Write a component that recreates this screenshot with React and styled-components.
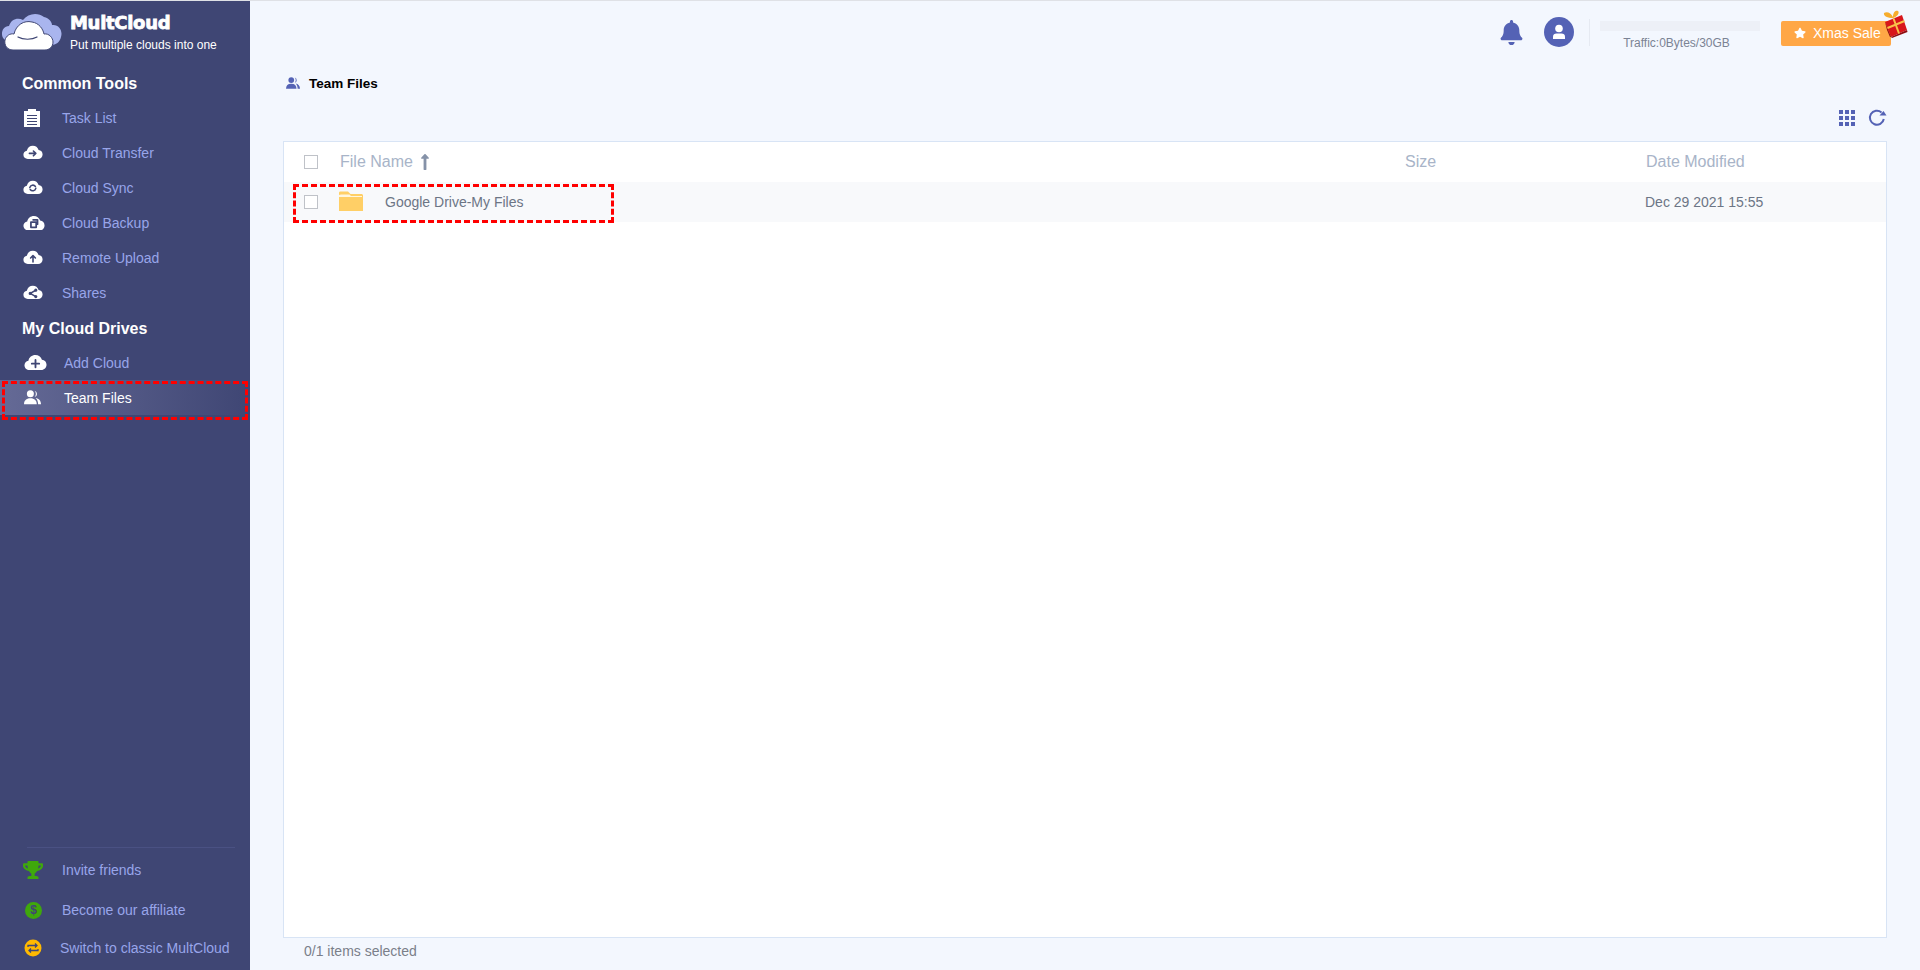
import React from 'react'
import styled, { createGlobalStyle } from 'styled-components'
import { FaBell, FaStar, FaTrophy, FaLongArrowAltUp } from 'react-icons/fa'

const GlobalStyle = createGlobalStyle`
  html, body {
    margin: 0;
    padding: 0;
    height: 100%;
    overflow: hidden;
    font-family: "Liberation Sans", Arial, sans-serif;
    background: #f3f7fe;
  }
`

const CLOUD = 'M6 17.500C2.800 17.500 .5 15.200 .5 12.300c0-2.600 1.800-4.600 4.300-5C5.500 3.400 8.600 1 12.300 1c3.400 0 6.200 2 7.200 5.200C22.400 6.300 24.500 8.800 24.500 11.800 24.500 15 22 17.500 18.800 17.500Z'

const CloudIcon = ({ width = 20, children }) => (
  <svg width={width} height={width * 0.72} viewBox="0 0 25 18">
    <path d={CLOUD} fill="#fff" />
    <g stroke="#3f4674" fill="none" strokeWidth="2" strokeLinecap="round" strokeLinejoin="round">
      {children}
    </g>
  </svg>
)

const Logo = () => (
  <svg width="62" height="40" viewBox="0 0 62 40">
    <path d="M3 28C-1 24 1 15 8 15 10 8 17 6 22 9 27 2 37 1 43 6 48 7 51 11 51 14 58 13 62 20 60 26 59 31 55 34 50 34L8 34Z" fill="#a9b5ee" />
    <path d="M12 39C6 39 3 34 4 29 5 25 9 22 13 23 15 14 23 9 31 11 38 12 42 18 43 23 48 22 52 27 52 31 52 36 48 39 44 39Z" fill="#fff" stroke="#3f4674" strokeWidth="1" />
    <path d="M17 26C22 29 31 29 36 26" stroke="#3f4674" strokeWidth="1.200" fill="none" strokeLinecap="round" />
  </svg>
)

const Gift = () => (
  <svg width="26" height="28" viewBox="0 0 26 28">
    <path d="M3 12L20 5 25 20 9 27Z" fill="#d8161b" />
    <path d="M9 27L3 12 5 20 8 27Z" fill="#8e0c10" />
    <path d="M9 27L25 20 25.500 22 10 28Z" fill="#8e0c10" />
    <path d="M11.500 8.500L17 23.500M5.500 18L22.500 11" stroke="#f8c04a" strokeWidth="2" fill="none" />
    <path d="M11 8C6 8 1 6 2 3 5 1 9 3 11 7 11 3 13 0 16 1 18 3 15 7 11 8Z" fill="#f6ad2d" />
  </svg>
)

const TaskIcon = () => (
  <svg width="18" height="19" viewBox="0 0 18 19">
    <path d="M1 3H5V1H13V3H17V19H1Z" fill="#fff" />
    <path d="M4 7.500H14M4 10.500H14M4 13.500H14M4 16.500H14" stroke="#3f4674" strokeWidth="1.200" />
  </svg>
)

const AvatarIcon = () => (
  <svg width="30" height="30" viewBox="0 0 30 30">
    <circle cx="15" cy="15" r="15" fill="#5462b5" />
    <circle cx="15" cy="11.500" r="3.800" fill="#fff" />
    <path d="M9 22V19.500C9 17.500 10.500 16.500 12.500 16.500H17.500C19.500 16.500 21 17.500 21 19.500V22Z" fill="#fff" />
  </svg>
)

const GridIcon = () => (
  <svg width="16" height="16" viewBox="0 0 16 16" fill="#5462b5">
    {[0, 6, 12].map((y) => [0, 6, 12].map((x) => (
      <rect key={x + '-' + y} x={x} y={y} width="4" height="4" />
    )))}
  </svg>
)

const RefreshIcon = () => (
  <svg width="19" height="18" viewBox="0 0 19 18">
    <path d="M13.500 3.400A7 7 0 1 0 15.800 10" stroke="#5462b5" strokeWidth="2" fill="none" />
    <path d="M11.500 6.500H18.500L15.500 2Z" fill="#5462b5" />
  </svg>
)

const TeamIcon = ({ width, color }) => (
  <svg width={width} height={width * 0.875} viewBox="0 0 16 14" fill={color}>
    <circle cx="6" cy="3.500" r="3.300" />
    <path d="M0 13.500C0 10 2 7.800 6 7.800S12 10 12 13.500Z" />
    <path d="M10 .6A3.200 3.200 0 0 1 10 6.700 5 5 0 0 0 10 .6ZM11 7.500C14 8 16 10 16 13.500H13.300C13.300 11 12.500 9 11 7.500Z" />
  </svg>
)

const tools = [
  { label: 'Task List', icon: <TaskIcon /> },
  { label: 'Cloud Transfer', icon: <CloudIcon><path d="M8 10.500h8M13 7.500l3 3-3 3" /></CloudIcon> },
  { label: 'Cloud Sync', icon: <CloudIcon><path d="M8.500 9.500a4 4 0 0 1 7-1.500M16 10.500a4 4 0 0 1-7 1.500" /></CloudIcon> },
  { label: 'Cloud Backup', icon: <CloudIcon width={22}><path d="M9 8h6v6H9zM11.500 5.500h5v5" /></CloudIcon> },
  { label: 'Remote Upload', icon: <CloudIcon><path d="M12.500 15V8M9.500 10l3-3 3 3" /></CloudIcon> },
  { label: 'Shares', icon: <CloudIcon><path d="M16 6.500l-7 4 7 4" /><circle cx="16" cy="6.500" r="1" /><circle cx="9" cy="10.500" r="1" /><circle cx="16" cy="14.500" r="1" /></CloudIcon> }
]

const App = () => (
  <Page>
    <GlobalStyle />
    <Sidebar>
      <Brand>
        <Logo />
        <BrandText>
          <BrandName>MultCloud</BrandName>
          <BrandTag>Put multiple clouds into one</BrandTag>
        </BrandText>
      </Brand>
      <SectionTitle>Common Tools</SectionTitle>
      {tools.map((tool) => (
        <NavItem key={tool.label}>
          <NavIcon>{tool.icon}</NavIcon>
          <span>{tool.label}</span>
        </NavItem>
      ))}
      <SectionTitle $spaced>My Cloud Drives</SectionTitle>
      <NavItem $wide>
        <NavIcon $wide><CloudIcon width={23}><path d="M12.500 6.500v8M8.500 10.500h8" /></CloudIcon></NavIcon>
        <span>Add Cloud</span>
      </NavItem>
      <NavItem $wide $active>
        <NavIcon $wide><TeamIcon width={17} color="#fff" /></NavIcon>
        <span>Team Files</span>
      </NavItem>
      <SidebarFooter>
        <FooterItem $height={40}>
          <NavIcon><FaTrophy size={20} color="#3fa80c" /></NavIcon>
          <span>Invite friends</span>
        </FooterItem>
        <FooterItem $height={40}>
          <NavIcon><CoinBadge>$</CoinBadge></NavIcon>
          <span>Become our affiliate</span>
        </FooterItem>
        <FooterItem $height={36}>
          <NavIcon $tight>
            <svg width="18" height="18" viewBox="0 0 18 18">
              <circle cx="9" cy="9" r="8.500" fill="#ffb900" />
              <path d="M4 8V6.500h9M11 4.500l2 2-2 2M14 10v1.500H5M7 13.500l-2-2 2-2" stroke="#3f4674" strokeWidth="1.300" fill="none" />
            </svg>
          </NavIcon>
          <span>Switch to classic MultCloud</span>
        </FooterItem>
      </SidebarFooter>
    </Sidebar>
    <Main>
      <TopBar>
        <FaBell size={25} color="#5462b5" />
        <AvatarIcon />
        <TrafficBox>
          <TrafficBar />
          <TrafficText>Traffic:0Bytes/30GB</TrafficText>
        </TrafficBox>
        <SaleButton>
          <FaStar size={12} color="#fff" />
          Xmas Sale
          <GiftBadge><Gift /></GiftBadge>
        </SaleButton>
      </TopBar>
      <Breadcrumb>
        <TeamIcon width={14} color="#5462b5" />
        <strong>Team Files</strong>
      </Breadcrumb>
      <Tools>
        <GridIcon />
        <RefreshIcon />
      </Tools>
      <Table>
        <HeadRow>
          <CheckCell><Check /></CheckCell>
          <NameCell>File Name <FaLongArrowAltUp size={18} color="#8592a8" /></NameCell>
          <SizeCell>Size</SizeCell>
          <DateCell>Date Modified</DateCell>
        </HeadRow>
        <FileRow>
          <CheckCell><Check /></CheckCell>
          <FolderCell>
            <svg width="24" height="20" viewBox="0 0 24 20">
              <path d="M0 2C0 1 .5 .5 1.500 .5H9L11.500 3H23L24 4V20H0Z" fill="#ffcf66" />
              <path d="M2 3.500H10.500L12 5H23V6H0V4Z" fill="#fff6de" />
            </svg>
            <span>Google Drive-My Files</span>
            <Marker />
          </FolderCell>
          <SizeCell />
          <DateCell>Dec 29 2021 15:55</DateCell>
        </FileRow>
      </Table>
      <Status>0/1 items selected</Status>
    </Main>
  </Page>
)

const Page = styled.div`
  display: flex;
  height: 970px;
  box-sizing: border-box;
  border-top: 1px solid #dfe1e6;
`

const Sidebar = styled.aside`
  width: 250px;
  flex-shrink: 0;
  display: flex;
  flex-direction: column;
  background: #3f4674;
`

const Brand = styled.div`
  height: 67px;
  flex-shrink: 0;
  box-sizing: border-box;
  padding: 10px 0 0 1px;
  display: flex;
  gap: 7px;
`

const BrandText = styled.div`
  display: flex;
  flex-direction: column;
  color: #fff;
`

const BrandName = styled.div`
  font-family: "DejaVu Sans", sans-serif;
  font-size: 18px;
  font-weight: 700;
  line-height: 24px;
  letter-spacing: -0.3px;
  -webkit-text-stroke: 0.8px #fff;
`

const BrandTag = styled.div`
  font-size: 12px;
  line-height: 14px;
  margin-top: 3px;
`

const SectionTitle = styled.div`
  height: ${(p) => (p.$spaced ? '33px' : '32px')};
  flex-shrink: 0;
  margin-top: ${(p) => (p.$spaced ? '2px' : '0')};
  padding-left: 22px;
  display: flex;
  align-items: center;
  font-size: 16px;
  font-weight: 700;
  color: #fff;
`

const NavItem = styled.div`
  position: relative;
  height: 35px;
  flex-shrink: 0;
  display: flex;
  align-items: center;
  padding-left: ${(p) => (p.$wide ? '22px' : '21px')};
  font-size: 14px;
  color: ${(p) => (p.$active ? '#fff' : '#98a5ea')};
  background: ${(p) => (p.$active ? 'linear-gradient(90deg, #656a96, #3f4674)' : 'none')};

  ${(p) => p.$active && `
    &::after {
      content: "";
      position: absolute;
      inset: 1px 2px -5px 2px;
      border: 3px dashed #f00;
    }
  `}
`

const NavIcon = styled.span`
  width: ${(p) => (p.$tight ? '39px' : p.$wide ? '42px' : '41px')};
  flex-shrink: 0;
  display: flex;
  align-items: center;
  padding-left: ${(p) => (p.$tight ? '3px' : '2px')};
  box-sizing: border-box;
`

const SidebarFooter = styled.div`
  margin: auto 15px 4px 27px;
  padding-top: 2px;
  border-top: 1px solid #4a5183;

  & > div {
    margin: 0 -15px 0 -27px;
  }
`

const FooterItem = styled.div`
  height: ${(p) => p.$height}px;
  display: flex;
  align-items: center;
  padding-left: 21px;
  font-size: 14px;
  color: #98a5ea;
  white-space: nowrap;
`

const CoinBadge = styled.span`
  width: 17px;
  height: 17px;
  margin-left: 2px;
  border-radius: 50%;
  background: #3fa80c;
  color: #3f4674;
  font-size: 12px;
  font-weight: 700;
  display: flex;
  align-items: center;
  justify-content: center;
`

const Main = styled.main`
  flex: 1;
  min-width: 0;
  display: flex;
  flex-direction: column;
  padding: 0 33px;
  background: #f3f7fe;
`

const TopBar = styled.header`
  height: 65px;
  flex-shrink: 0;
  display: flex;
  align-items: center;
  justify-content: flex-end;
  margin-right: -4px;
  padding-bottom: 3px;
  box-sizing: border-box;
  gap: 20px;
`

const TrafficBox = styled.div`
  width: 160px;
  padding-left: 10px;
  margin-left: -5px;
  border-left: 1px solid #e6eaf2;
  height: 27px;
  display: flex;
  flex-direction: column;
  align-items: center;
`

const TrafficBar = styled.div`
  width: 160px;
  height: 10px;
  margin-top: 2px;
  flex-shrink: 0;
  background: #edf0f7;
`

const TrafficText = styled.div`
  margin: 5px 7px 0 0;
  font-size: 12px;
  line-height: 14px;
  color: #7b8394;
  white-space: nowrap;
`

const SaleButton = styled.div`
  position: relative;
  width: 110px;
  height: 25px;
  margin: 2px 0 0 1px;
  box-sizing: border-box;
  padding-left: 13px;
  display: flex;
  align-items: center;
  gap: 7px;
  border-radius: 2px;
  background: #ffa746;
  color: #fff;
  font-size: 14px;
  white-space: nowrap;
`

const GiftBadge = styled.span`
  position: absolute;
  top: -11px;
  right: -17px;
  line-height: 0;
`

const Breadcrumb = styled.div`
  height: 34px;
  flex-shrink: 0;
  display: flex;
  align-items: center;
  gap: 9px;
  padding-left: 3px;
  font-size: 13.5px;
  color: #000;
`

const Tools = styled.div`
  height: 41px;
  flex-shrink: 0;
  display: flex;
  align-items: center;
  justify-content: flex-end;
  gap: 13px;
  padding-bottom: 5px;
  box-sizing: border-box;
`

const Table = styled.section`
  flex: 1;
  background: #fff;
  border: 1px solid #d8e4f5;
`

const HeadRow = styled.div`
  height: 40px;
  display: flex;
  align-items: center;
  font-size: 16px;
  color: #a8b4c8;
`

const FileRow = styled.div`
  height: 40px;
  display: flex;
  align-items: center;
  font-size: 14px;
  color: #6c7585;
  background: #f8f9fb;
`

const CheckCell = styled.div`
  width: 56px;
  flex-shrink: 0;
  padding-left: 20px;
  box-sizing: border-box;
`

const Check = styled.div`
  width: 14px;
  height: 14px;
  box-sizing: border-box;
  border: 1px solid #bfc2c8;
  background: #fff;
`

const NameCell = styled.div`
  width: 1065px;
  display: flex;
  align-items: center;
  gap: 3px;
`

const FolderCell = styled.div`
  position: relative;
  width: 1065px;
  height: 100%;
  display: flex;
  align-items: center;
  gap: 22px;
  margin-left: -1px;
  padding-bottom: 3px;
  box-sizing: border-box;

  & > span:first-of-type {
    margin-top: 3px;
  }
`

const Marker = styled.span`
  position: absolute;
  left: -46px;
  top: 2px;
  width: 321px;
  height: 39px;
  box-sizing: border-box;
  border: 3px dashed #f00;
`

const SizeCell = styled.div`
  width: 241px;
  flex-shrink: 0;
`

const DateCell = styled.div`
  flex: 1;
`

const Status = styled.div`
  height: 32px;
  flex-shrink: 0;
  padding: 5px 0 0 21px;
  box-sizing: border-box;
  font-size: 14px;
  line-height: 16px;
  color: #7a7f8a;
`

export default App
